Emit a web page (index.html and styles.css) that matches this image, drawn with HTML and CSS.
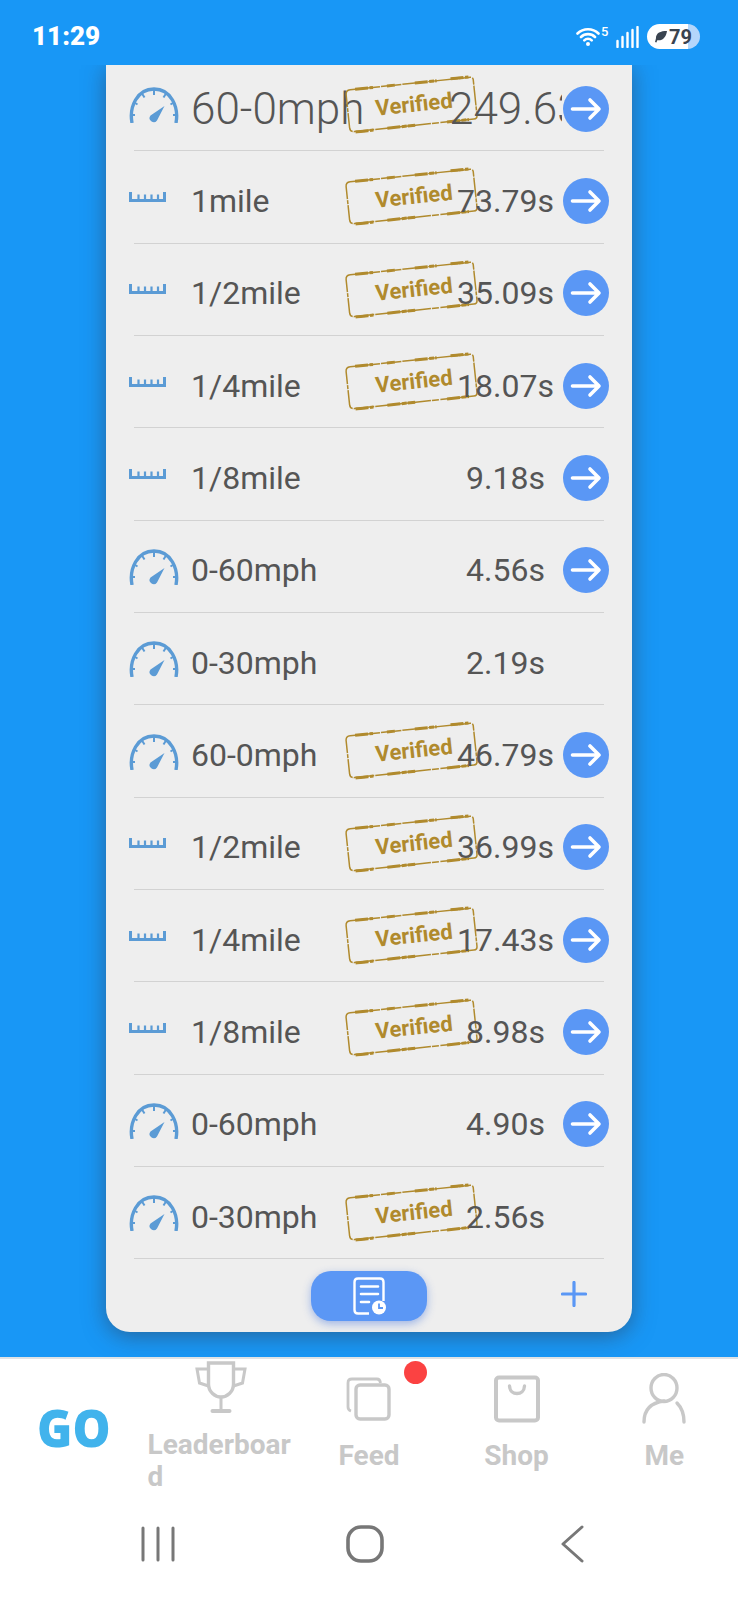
FILE: index.html
```html
<!DOCTYPE html>
<html lang="en">
<head>
    <meta charset="UTF-8">
    <title>Runs</title>
    <link rel="stylesheet" href="styles.css">
</head>
<body>
<svg class="defs" width="0" height="0">
    <symbol id="gauge" viewBox="0 0 50 36">
        <path d="M3 36C0 20 8 2 25 2C42 2 50 20 47 36" fill="none" stroke="#5b9bd5" stroke-width="3.400"/>
        <path d="M25 3V8M13 6.500L15.500 10.500M37 6.500L34.500 10.500M4.500 15L8.500 17.500M45.500 15L41.500 17.500M2 28H6M48 28H44" fill="none" stroke="#5b9bd5" stroke-width="2"/>
        <path d="M35.500 19L28 33.500A4 4 0 0 1 21.500 28.500Z" fill="#5b9bd5"/>
    </symbol>
    <symbol id="ruler" viewBox="0 0 37 10">
        <path d="M0 0H3V7H34V0H37V10H0Z" fill="#5b9bd5"/>
        <path d="M9.500 2.500V8M16 2.500V8M22.500 2.500V8M29 2.500V8" stroke="#5b9bd5" stroke-width="2.200"/>
    </symbol>
    <symbol id="arrow" viewBox="0 0 46 46">
        <circle cx="23" cy="23" r="23" fill="#5a97f5"/>
        <path d="M9.500 23H35M27 14L36 23L27 32" fill="none" stroke="#fff" stroke-width="3.600" stroke-linecap="round" stroke-linejoin="round"/>
    </symbol>
    <symbol id="border" viewBox="0 0 133 47">
        <path d="M7 2.500H128Q130 2.500 130.500 5V41Q130.500 44.500 127 44.500H7Q2.500 44.500 2.500 40V7Q2.500 2.500 7 2.500" fill="none" stroke="#b08a2d" stroke-width="1.500" stroke-dasharray="30 1 12 1.500 7 1 20 1 4 1"/>
        <path d="M12 2.500H30M44 2.500H52M72 2.500H94M108 2H126M100 44.500H122M40 44.500H68M8 45H26" fill="none" stroke="#b08a2d" stroke-width="3" stroke-dasharray="13 1.500 5 1"/>
    </symbol>
</svg>

<div class="screen">
    <div class="status">
        <span class="time">11:29</span>
        <div class="status-right">
            <svg class="wifi" width="24" height="20" viewBox="0 0 24 20">
                <path d="M1.500 7.500A15 15 0 0 1 22.500 7.500M5 11A10 10 0 0 1 19 11M8.300 14.300A5.200 5.200 0 0 1 15.700 14.300" fill="none" stroke="#fff" stroke-width="2.600" stroke-linecap="round"/>
                <circle cx="12" cy="18" r="2" fill="#fff"/>
            </svg>
            <span class="wifi-num">5</span>
            <svg class="signal" width="23" height="22" viewBox="0 0 23 22">
                <path d="M1.500 15V21M6.500 11V21M11.500 7V21M16.500 4V21M21.500 1V21" fill="none" stroke="#fff" stroke-width="2.400" stroke-linecap="round"/>
            </svg>
            <div class="battery">
                <svg width="12" height="12" viewBox="0 0 13 13">
                    <path d="M13 0C6 0 1 2 1 8L0 12L1.500 12.500L2.500 10C8 11 12 7 13 0Z" fill="#3a4450"/>
                </svg>
                <span>79</span>
            </div>
        </div>
    </div>

    <div class="card">
        <div class="list">
            <div class="row row-big">
                <svg class="ico"><use href="#gauge"/></svg>
                <span class="name">60-0mph</span>
                <div class="stamp"><svg><use href="#border"/></svg><b>Verified</b></div>
                <span class="val">249.63s</span>
                <svg class="go"><use href="#arrow"/></svg>
            </div>
            <div class="row">
                <svg class="ico ico-ruler"><use href="#ruler"/></svg>
                <span class="name">1mile</span>
                <div class="stamp"><svg><use href="#border"/></svg><b>Verified</b></div>
                <span class="val">73.79s</span>
                <svg class="go"><use href="#arrow"/></svg>
            </div>
            <div class="row">
                <svg class="ico ico-ruler"><use href="#ruler"/></svg>
                <span class="name">1/2mile</span>
                <div class="stamp"><svg><use href="#border"/></svg><b>Verified</b></div>
                <span class="val">35.09s</span>
                <svg class="go"><use href="#arrow"/></svg>
            </div>
            <div class="row">
                <svg class="ico ico-ruler"><use href="#ruler"/></svg>
                <span class="name">1/4mile</span>
                <div class="stamp"><svg><use href="#border"/></svg><b>Verified</b></div>
                <span class="val">18.07s</span>
                <svg class="go"><use href="#arrow"/></svg>
            </div>
            <div class="row">
                <svg class="ico ico-ruler"><use href="#ruler"/></svg>
                <span class="name">1/8mile</span>
                <span class="val">9.18s</span>
                <svg class="go"><use href="#arrow"/></svg>
            </div>
            <div class="row">
                <svg class="ico"><use href="#gauge"/></svg>
                <span class="name">0-60mph</span>
                <span class="val">4.56s</span>
                <svg class="go"><use href="#arrow"/></svg>
            </div>
            <div class="row">
                <svg class="ico"><use href="#gauge"/></svg>
                <span class="name">0-30mph</span>
                <span class="val">2.19s</span>
                <span class="go"></span>
            </div>
            <div class="row">
                <svg class="ico"><use href="#gauge"/></svg>
                <span class="name">60-0mph</span>
                <div class="stamp"><svg><use href="#border"/></svg><b>Verified</b></div>
                <span class="val">46.79s</span>
                <svg class="go"><use href="#arrow"/></svg>
            </div>
            <div class="row">
                <svg class="ico ico-ruler"><use href="#ruler"/></svg>
                <span class="name">1/2mile</span>
                <div class="stamp"><svg><use href="#border"/></svg><b>Verified</b></div>
                <span class="val">36.99s</span>
                <svg class="go"><use href="#arrow"/></svg>
            </div>
            <div class="row">
                <svg class="ico ico-ruler"><use href="#ruler"/></svg>
                <span class="name">1/4mile</span>
                <div class="stamp"><svg><use href="#border"/></svg><b>Verified</b></div>
                <span class="val">17.43s</span>
                <svg class="go"><use href="#arrow"/></svg>
            </div>
            <div class="row">
                <svg class="ico ico-ruler"><use href="#ruler"/></svg>
                <span class="name">1/8mile</span>
                <div class="stamp"><svg><use href="#border"/></svg><b>Verified</b></div>
                <span class="val">8.98s</span>
                <svg class="go"><use href="#arrow"/></svg>
            </div>
            <div class="row">
                <svg class="ico"><use href="#gauge"/></svg>
                <span class="name">0-60mph</span>
                <span class="val">4.90s</span>
                <svg class="go"><use href="#arrow"/></svg>
            </div>
            <div class="row">
                <svg class="ico"><use href="#gauge"/></svg>
                <span class="name">0-30mph</span>
                <div class="stamp"><svg><use href="#border"/></svg><b>Verified</b></div>
                <span class="val">2.56s</span>
                <span class="go"></span>
            </div>
        </div>
        <div class="card-foot">
            <div class="history">
                <svg width="33" height="38" viewBox="0 0 33 38">
                    <path d="M16 36.500H5Q1.500 36.500 1.500 33V5Q1.500 1.500 5 1.500H27Q30.500 1.500 30.500 5V24" fill="none" stroke="#fff" stroke-width="2.400"/>
                    <path d="M8 9.500H25M8 17H25M8 25H16" fill="none" stroke="#fff" stroke-width="2.600" stroke-linecap="round"/>
                    <circle cx="26" cy="30.500" r="7" fill="#fff"/>
                    <path d="M26 26.500V31H30" fill="none" stroke="#5b97f5" stroke-width="1.800"/>
                </svg>
            </div>
            <svg class="plus" width="26" height="26" viewBox="0 0 26 26">
                <path d="M13 1.500V24.500M1.500 13H24.500" fill="none" stroke="#5a97f5" stroke-width="3.200" stroke-linecap="round"/>
            </svg>
        </div>
    </div>

    <div class="tabs">
        <div class="tab tab-go">GO</div>
        <div class="tab tab-board">
            <svg class="tab-ico" viewBox="0 0 52 52">
                <path d="M13.500 2H38.500V23C38.500 31 32 36 26 36C20 36 13.500 31 13.500 23Z" fill="none" stroke="#c8c8c8" stroke-width="3.400"/>
                <path d="M13.500 8H2L4.500 22L13.500 25M38.500 8H50L47.500 22L38.500 25M26 36V49" fill="none" stroke="#c8c8c8" stroke-width="3"/>
                <path d="M17.500 50H34.500" stroke="#c8c8c8" stroke-width="4" stroke-linecap="round"/>
            </svg>
            <span class="tab-text">Leaderboard</span>
        </div>
        <div class="tab tab-feed">
            <svg class="tab-ico" viewBox="0 0 52 52">
                <path d="M8 38Q5 37 5 34V10Q5 6 9 6H34Q37 6 37.500 10" fill="none" stroke="#c8c8c8" stroke-width="2.800"/>
                <rect x="13" y="12" width="33" height="34" rx="4" fill="none" stroke="#c8c8c8" stroke-width="3.400"/>
            </svg>
            <span class="tab-text">Feed</span>
            <i class="dot"></i>
        </div>
        <div class="tab">
            <svg class="tab-ico" viewBox="0 0 52 52">
                <rect x="5" y="4.500" width="42" height="43" rx="3" fill="none" stroke="#c8c8c8" stroke-width="4"/>
                <path d="M18.500 13C19 23 33 23 33.500 13" fill="none" stroke="#c8c8c8" stroke-width="3.400" stroke-linecap="round"/>
            </svg>
            <span class="tab-text">Shop</span>
        </div>
        <div class="tab">
            <svg class="tab-ico" viewBox="0 0 52 52">
                <ellipse cx="26" cy="15" rx="13" ry="13.500" fill="none" stroke="#c8c8c8" stroke-width="3.400"/>
                <path d="M6 49C6 38 11 30 26 28M39 30C44 35 46 41 46 49" fill="none" stroke="#c8c8c8" stroke-width="3.400" stroke-linecap="round"/>
            </svg>
            <span class="tab-text">Me</span>
        </div>
    </div>

    <div class="nav">
        <div class="nav-item">
            <svg width="34" height="36" viewBox="0 0 34 36">
                <path d="M2 2V34M17 2V34M32 2V34" stroke="#777" stroke-width="3" stroke-linecap="round"/>
            </svg>
        </div>
        <div class="nav-item">
            <svg width="38" height="38" viewBox="0 0 38 38">
                <rect x="2" y="2" width="34" height="34" rx="13" fill="none" stroke="#777" stroke-width="3.600"/>
            </svg>
        </div>
        <div class="nav-item">
            <svg width="24" height="38" viewBox="0 0 24 38">
                <path d="M22 2L3 19L22 36" fill="none" stroke="#777" stroke-width="3" stroke-linecap="round" stroke-linejoin="round"/>
            </svg>
        </div>
    </div>
</div>
</body>
</html>
```

FILE: styles.css
```css
* {
    margin: 0;
    padding: 0;
    box-sizing: border-box;
}

body {
    background: #fff;
    font-family: Roboto, "Liberation Sans", sans-serif;
}

.defs {
    position: absolute;
}

.screen {
    width: 738px;
    height: 1600px;
    display: flex;
    flex-direction: column;
    background: #1897f6;
    overflow: hidden;
}

/* status bar */
.status {
    height: 65px;
    flex: none;
    padding: 24px 38px 0 32px;
    display: flex;
    justify-content: space-between;
    align-items: flex-start;
    background: #1897f6;
    position: relative;
    z-index: 1;
    color: #fff;
}

.time {
    font-size: 26px;
    font-weight: 900;
    line-height: 25px;
}

.status-right {
    display: flex;
    align-items: flex-start;
}

.wifi {
    margin-top: 2px;
}

.wifi-num {
    font-size: 13px;
    font-weight: 500;
    line-height: 13px;
    margin: 1px 8px 0 1px;
    width: 7px;
}

.signal {
    margin-top: 2px;
    margin-right: 8px;
}

.battery {
    width: 53px;
    height: 25px;
    border-radius: 13px;
    padding-left: 8px;
    display: flex;
    align-items: center;
    gap: 2px;
    background: linear-gradient(90deg, #fff 78%, #b4d6fb 78%);
    color: #3a4450;
    font-size: 20px;
    font-weight: 700;
}

/* card */
.card {
    width: 526px;
    height: 1267px;
    flex: none;
    margin: 0 auto;
    background: #eee;
    border-radius: 0 0 24px 24px;
    box-shadow: 0 4px 22px rgba(50, 60, 80, 0.55);
    overflow: hidden;
}

.list {
    margin-top: -6px;
    padding: 0 28px;
}

.row {
    height: 92.35px;
    padding-top: 8px;
    border-bottom: 1px solid #d2d2d2;
    display: flex;
    align-items: center;
    position: relative;
    color: #555;
    font-size: 32px;
}

.ico {
    width: 50px;
    height: 36px;
    flex: none;
    margin: -7px 12px 0 -5px;
}

.ico-ruler {
    width: 37px;
    height: 10px;
    margin-right: 25px;
    margin-top: -8px;
}

.name {
    flex: 1;
    white-space: nowrap;
}

.val {
    width: 113px;
    flex: none;
    overflow: hidden;
    white-space: nowrap;
    text-align: center;
    position: relative;
}

.go {
    width: 46px;
    height: 46px;
    flex: none;
    margin-right: -5px;
    position: relative;
    margin-left: 1px;
}

.row-big {
    font-size: 44px;
    font-weight: 300;
}

.stamp {
    position: absolute;
    left: 211px;
    top: 22px;
    width: 133px;
    height: 47px;
    transform: rotate(-6deg);
    display: flex;
    align-items: center;
    justify-content: center;
    color: #b08a2d;
    font-size: 22px;
    font-weight: 400;
}

.stamp svg {
    position: absolute;
    left: 0;
    top: 0;
    width: 133px;
    height: 47px;
}

.stamp b {
    margin-left: 5px;
    font-weight: 700;
}

.card-foot {
    height: 73px;
    padding: 12px 45px 0;
    display: grid;
    grid-template-columns: 1fr auto 1fr;
    align-items: start;
}

.history {
    grid-column: 2;
    width: 116px;
    height: 50px;
    border-radius: 20px;
    background: #5b97f5;
    box-shadow: 0 3px 8px rgba(60, 110, 220, 0.45);
    display: flex;
    align-items: center;
    justify-content: center;
}

.plus {
    justify-self: end;
    margin-top: 10px;
}

/* bottom tabs */
.tabs {
    margin-top: 25px;
    height: 143px;
    flex: none;
    padding-top: 14px;
    background: #fff;
    border-top: 2px solid #dfe3e6;
    display: grid;
    grid-template-columns: repeat(5, 1fr);
    align-items: start;
}

.tab {
    min-width: 0;
    display: flex;
    flex-direction: column;
    align-items: center;
    position: relative;
}

.tab-ico {
    width: 52px;
    height: 52px;
    flex: none;
}

.tab-text {
    max-width: 100%;
    margin-top: 15px;
    color: #c8c8c8;
    font-size: 28px;
    font-weight: 700;
    line-height: 32px;
    word-break: break-all;
}

.tab-go {
    margin-top: 24px;
    color: #41b3ec;
    font-family: "Open Sans", sans-serif;
    font-size: 52px;
    font-weight: 800;
    line-height: 60px;
    transform: scaleX(0.92);
}

.tab-board {
    margin-top: -12px;
}

.tab-board .tab-text {
    margin-top: 16px;
}

.dot {
    position: absolute;
    left: 109px;
    top: -12px;
    width: 23px;
    height: 23px;
    border-radius: 50%;
    background: #fb4242;
}

/* system nav */
.nav {
    flex: 1;
    background: #fff;
    padding-right: 8px;
    padding-bottom: 12px;
    display: flex;
    justify-content: center;
    align-items: center;
}

.nav-item {
    width: 207px;
    display: flex;
    justify-content: center;
}
```
